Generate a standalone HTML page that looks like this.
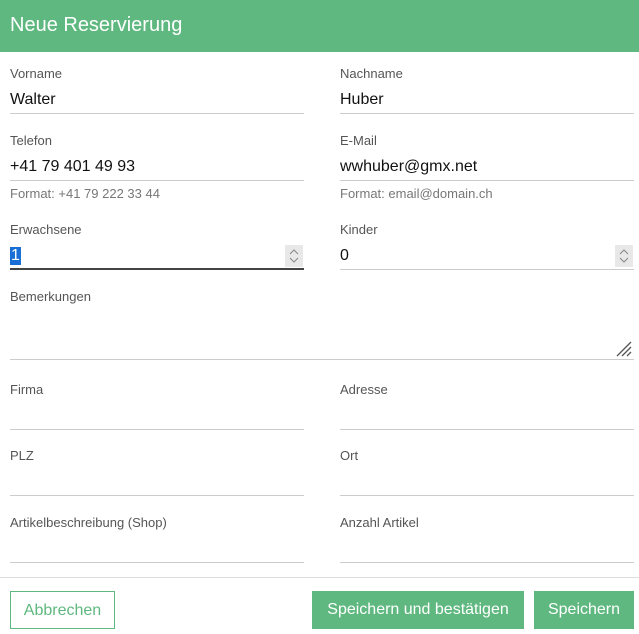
<!DOCTYPE html><html><head><style>
body{margin:0;width:639px;height:634px;background:#fff;font-family:"Liberation Sans",sans-serif;position:relative;overflow:hidden}
.a{position:absolute;white-space:nowrap}
.h{left:0;top:0;width:639px;height:52px;background:#5fb87f}
.t{left:10px;top:14px;font-size:20px;color:#fff}
.l{font-size:13px;color:#555}
.v{font-size:16px;color:#111}
.hint{font-size:13px;color:#777}
.ln{height:1px;background:#ccc;width:294px}
.sp{width:18px;height:22px;background:#e8e8e8}
.b{top:591px;height:38px;font-size:16px;line-height:38px;text-align:center;box-sizing:border-box}
</style></head><body>
<div class="a h"></div><div class="a t">Neue Reservierung</div>

<div class="a l" style="left:10px;top:66px">Vorname</div><div class="a v" style="left:10px;top:91px">Walter</div><div class="a ln" style="left:10px;top:113px"></div>
<div class="a l" style="left:340px;top:66px">Nachname</div><div class="a v" style="left:340px;top:91px">Huber</div><div class="a ln" style="left:340px;top:113px"></div>

<div class="a l" style="left:10px;top:133px">Telefon</div><div class="a v" style="left:10px;top:158px">+41 79 401 49 93</div><div class="a ln" style="left:10px;top:180px"></div><div class="a hint" style="left:10px;top:186px">Format: +41 79 222 33 44</div>
<div class="a l" style="left:340px;top:133px">E-Mail</div><div class="a v" style="left:340px;top:158px">wwhuber@gmx.net</div><div class="a ln" style="left:340px;top:180px"></div><div class="a hint" style="left:340px;top:186px">Format: email@domain.ch</div>

<div class="a l" style="left:10px;top:222px">Erwachsene</div><div class="a v" style="left:10px;top:247px;background:#1a6fd6;color:#fff;padding:0 1px">1</div>
<svg class="a sp" style="left:285px;top:245px" width="18" height="22"><path d="M5 9L9 5L13 9M5 13L9 17L13 13" fill="none" stroke="#888" stroke-width="1"/></svg>
<div class="a ln" style="left:10px;top:268px;height:2px;background:#444"></div>
<div class="a l" style="left:340px;top:222px">Kinder</div><div class="a v" style="left:340px;top:247px">0</div>
<svg class="a sp" style="left:615px;top:245px" width="18" height="22"><path d="M5 9L9 5L13 9M5 13L9 17L13 13" fill="none" stroke="#888" stroke-width="1"/></svg>
<div class="a ln" style="left:340px;top:269px"></div>

<div class="a l" style="left:10px;top:289px">Bemerkungen</div><div class="a ln" style="left:10px;top:359px;width:624px"></div>
<svg class="a" style="left:615px;top:340px" width="18" height="18"><path d="M2 16L16 2M7 16L16 7M12 16L16 12" stroke="#555" stroke-width="1.3"/></svg>

<div class="a l" style="left:10px;top:382px">Firma</div><div class="a ln" style="left:10px;top:429px"></div>
<div class="a l" style="left:340px;top:382px">Adresse</div><div class="a ln" style="left:340px;top:429px"></div>
<div class="a l" style="left:10px;top:448px">PLZ</div><div class="a ln" style="left:10px;top:495px"></div>
<div class="a l" style="left:340px;top:448px">Ort</div><div class="a ln" style="left:340px;top:495px"></div>
<div class="a l" style="left:10px;top:515px">Artikelbeschreibung (Shop)</div><div class="a ln" style="left:10px;top:562px"></div>
<div class="a l" style="left:340px;top:515px">Anzahl Artikel</div><div class="a ln" style="left:340px;top:562px"></div>

<div class="a" style="left:0;top:577px;width:639px;height:1px;background:#ddd"></div>
<div class="a b" style="left:10px;width:105px;border:1px solid #5fb87f;color:#5fb87f">Abbrechen</div>
<div class="a b" style="left:312px;width:212px;background:#5fb87f;color:#fff">Speichern und bestätigen</div>
<div class="a b" style="left:534px;width:100px;background:#5fb87f;color:#fff">Speichern</div>
</body></html>
